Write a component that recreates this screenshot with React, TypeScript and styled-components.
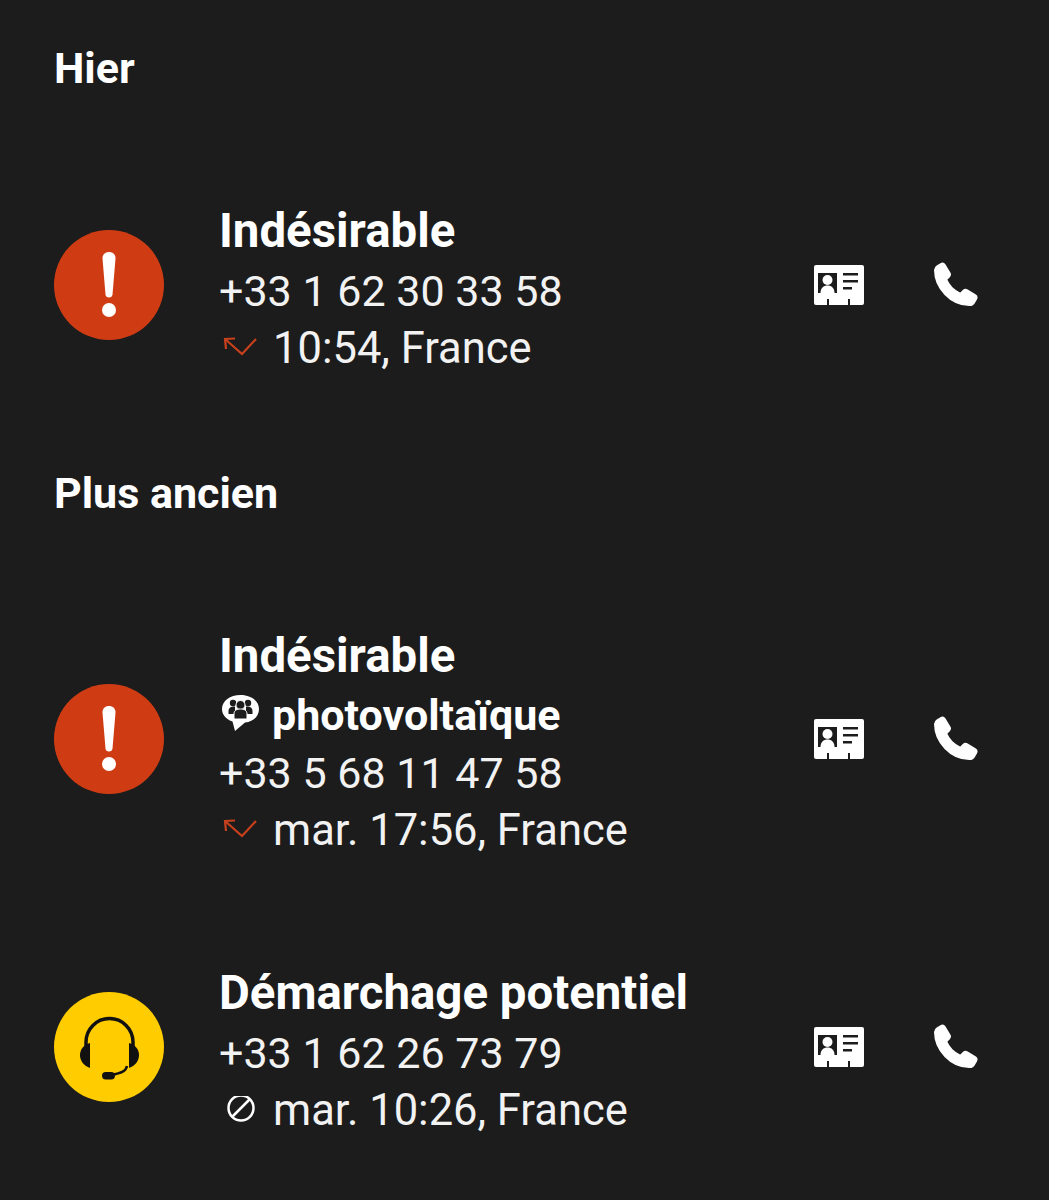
import styled, { createGlobalStyle } from "styled-components";

const GlobalStyle = createGlobalStyle`
  html, body {
    margin: 0;
    padding: 0;
    background: #1c1c1c;
    font-family: Roboto, "Liberation Sans", sans-serif;
  }
`;

function AlertBadge() {
  return (
    <Avatar $color="#cf3c14">
      <svg width="110" height="110" viewBox="0 0 110 110">
        <path
          d="M48.500 28.500c-.2-3.800 2.700-6.500 6.500-6.500s6.700 2.700 6.500 6.500l-3 36c-.2 2-1.500 3-3.500 3s-3.300-1-3.500-3z"
          fill="#fff"
        />
        <circle cx="55" cy="80" r="7" fill="#fff" />
      </svg>
    </Avatar>
  );
}

function HeadsetBadge() {
  return (
    <Avatar $color="#ffcc00">
      <svg width="110" height="110" viewBox="0 0 110 110">
        <path d="M32 54v-4a23.500 23.500 0 0 1 47 0v4" fill="none" stroke="#111" strokeWidth="3.500" />
        <path d="M36 51v25c-6-2-10-7-10-13s4-10 10-12z" fill="#111" />
        <path d="M75 51v25c6-2 10-7 10-13s-4-10-10-12z" fill="#111" />
        <path d="M73 74c-1 5-5 7-16 9" fill="none" stroke="#111" strokeWidth="2.500" />
        <rect x="48" y="80" width="13" height="7.500" rx="3.700" fill="#111" />
      </svg>
    </Avatar>
  );
}

function MissedIcon() {
  return (
    <svg width="38" height="24" viewBox="0 0 38 24" fill="none" stroke="#c8401c" strokeWidth="2.200">
      <path d="M6 2l17 15L37 2" />
      <path d="M7 12L6 2l10-.5" />
    </svg>
  );
}

function BlockedIcon() {
  return (
    <svg width="38" height="30" viewBox="0 0 38 30" fill="none" stroke="#fff" strokeWidth="2.500">
      <circle cx="22" cy="12" r="12.500" />
      <path d="M13 21l18-18" />
    </svg>
  );
}

function GroupIcon() {
  return (
    <svg width="38" height="36" viewBox="0 0 38 36">
      <path
        d="M19.500 0C9 0 1 6 1 14c0 6 4.500 10.500 10.500 12.500L14 36l10-8.500C32 27 38 21.500 38 14 38 6 30 0 19.500 0z"
        fill="#fff"
      />
      <g fill="#1c1c1c">
        <circle cx="12" cy="8" r="3.200" />
        <circle cx="27" cy="8" r="3.200" />
        <path d="M7.500 19v-3c0-3 2-4.500 5-4.500h1.500v7.500z" />
        <path d="M31.500 19v-3c0-3-2-4.500-5-4.500H25v7.500z" />
        <circle cx="19.500" cy="10" r="4.500" fill="#1c1c1c" stroke="#fff" strokeWidth="1" />
        <path
          d="M13 24v-5c0-3.500 2.500-5 6.500-5s6.500 1.500 6.500 5v5z"
          stroke="#fff"
          strokeWidth="1"
        />
      </g>
    </svg>
  );
}

function ContactIcon() {
  return (
    <svg width="50" height="40" viewBox="0 0 50 40">
      <path
        d="M2 0h46a2 2 0 0 1 2 2v36a2 2 0 0 1-2 2H36v-6h-2v6H15v-6h-2v6H2a2 2 0 0 1-2-2V2a2 2 0 0 1 2-2z"
        fill="#fff"
      />
      <rect x="4" y="8" width="19" height="20" fill="#1c1c1c" />
      <circle cx="13.500" cy="15" r="5" fill="#fff" />
      <path d="M6.500 28c0-5 3-7.500 7-7.500s7 2.500 7 7.500z" fill="#fff" />
      <rect x="29" y="8" width="15" height="2.500" fill="#1c1c1c" />
      <rect x="29" y="15" width="15" height="2.500" fill="#1c1c1c" />
      <rect x="29" y="22" width="9" height="2.500" fill="#1c1c1c" />
    </svg>
  );
}

function PhoneIcon() {
  return (
    <svg width="46" height="46" viewBox="0 0 46 46">
      <path
        d="M2 8C2 6 3 5 4.500 4L8 2c1.500-.8 2.800-.4 3.700 1l4.800 8c.8 1.300.6 2.500-.4 3.500l-3 3c1.500 3.500 3.400 6.200 5.700 8.500 2.500 2.500 5.300 4.400 8.700 5.800l3-3c1.100-1.100 2.400-1.200 3.700-.4l7.800 4.800c1.500.9 1.900 2.300 1.100 3.800l-1.900 3.200c-1.100 2-2.700 3-5 2.800C18 43 2 26 2 8z"
        fill="#fff"
        stroke="#fff"
        strokeWidth="2"
        strokeLinejoin="round"
      />
    </svg>
  );
}

type Call = {
  name: string;
  tag?: string;
  number: string;
  time: string;
  kind: "spam" | "sales";
  blocked?: boolean;
};

function CallRow({ call }: { call: Call }) {
  return (
    <Row>
      {call.kind === "spam" ? <AlertBadge /> : <HeadsetBadge />}
      <Details>
        <Name>{call.name}</Name>
        {call.tag && (
          <Tag>
            <GroupIcon />
            {call.tag}
          </Tag>
        )}
        <Line>{call.number}</Line>
        <Meta>
          <StatusSlot>{call.blocked ? <BlockedIcon /> : <MissedIcon />}</StatusSlot>
          {call.time}
        </Meta>
      </Details>
      <Actions>
        <ContactIcon />
        <PhoneIcon />
      </Actions>
    </Row>
  );
}

const yesterday: Call[] = [
  { name: "Indésirable", number: "+33 1 62 30 33 58", time: "10:54, France", kind: "spam" },
];

const older: Call[] = [
  {
    name: "Indésirable",
    tag: "photovoltaïque",
    number: "+33 5 68 11 47 58",
    time: "mar. 17:56, France",
    kind: "spam",
  },
  {
    name: "Démarchage potentiel",
    number: "+33 1 62 26 73 79",
    time: "mar. 10:26, France",
    kind: "sales",
    blocked: true,
  },
];

export default function App() {
  return (
    <Page>
      <GlobalStyle />
      <Section>
        <SectionTitle>Hier</SectionTitle>
        {yesterday.map((call) => (
          <CallRow key={call.number} call={call} />
        ))}
      </Section>
      <Section>
        <SectionTitle>Plus ancien</SectionTitle>
        {older.map((call) => (
          <CallRow key={call.number} call={call} />
        ))}
      </Section>
    </Page>
  );
}

const Page = styled.div`
  height: 1200px;
  overflow: hidden;
  background: #1c1c1c;
  color: #fff;
  padding: 42px 70px 0 54px;
  box-sizing: border-box;
`;

const Section = styled.section`
  & + & {
    margin-top: 89px;
  }
`;

const SectionTitle = styled.div`
  font-size: 43px;
  font-weight: 700;
  line-height: 52px;
  color: #fff;
  margin-bottom: 98px;
`;

const Row = styled.div`
  display: flex;
  align-items: center;

  & + & {
    margin-top: 94px;
  }
`;

const Avatar = styled.div<{ $color: string }>`
  width: 110px;
  height: 110px;
  border-radius: 50%;
  background: ${(p) => p.$color};
  flex: none;
  margin-right: 55px;
  svg {
    display: block;
  }
`;

const Details = styled.div`
  flex: 1;
  display: flex;
  flex-direction: column;
  padding-top: 8px;
`;

const Name = styled.div`
  font-size: 47.400px;
  font-weight: 700;
  line-height: 62px;
  white-space: nowrap;
`;

const Tag = styled.div`
  display: flex;
  align-items: center;
  gap: 13px;
  font-size: 43px;
  font-weight: 700;
  line-height: 57px;
  svg {
    margin: -6px 0 0 2px;
  }
`;

const Line = styled.div`
  display: flex;
  align-items: center;
  font-size: 43px;
  line-height: 58px;
  color: #f2f2f2;
  white-space: nowrap;
`;

const Meta = styled(Line)`
  font-size: 43.500px;
`;

const StatusSlot = styled.span`
  width: 54px;
  display: flex;
  align-items: center;
`;

const Actions = styled.div`
  display: flex;
  align-items: center;
  gap: 69px;
  flex: none;
`;
